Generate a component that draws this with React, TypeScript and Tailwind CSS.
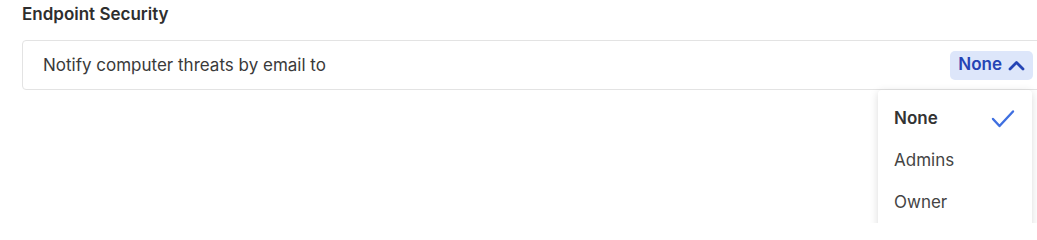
import React from "react";

function ChevronUp() {
  return (
    <svg width="17" height="11" viewBox="0 0 17 11" fill="none">
      <path d="M2 9 L8.5 2.5 L15 9" stroke="currentColor" strokeWidth="2.8" strokeLinecap="round" strokeLinejoin="round" />
    </svg>
  );
}

function Check() {
  return (
    <svg width="24" height="20" viewBox="0 0 24 20" fill="none">
      <path d="M2 10 L8.5 17 L22 2.5" stroke="#3f6fe0" strokeWidth="2.4" strokeLinecap="round" strokeLinejoin="round" />
    </svg>
  );
}

export default function App() {
  return (
    <div className="relative w-[1037px] h-[223px] overflow-hidden bg-white" style={{ fontFamily: "Inter, 'Noto Sans', sans-serif" }}>
      <div className="pl-[22px] pt-[3px]">
        <h2 className="text-[17px] leading-[22px] font-semibold text-[#2e2e2e]">Endpoint Security</h2>
        <div className="mt-[15px] w-[1030px] h-[50px] border border-[#e3e3e3] rounded-[4px] flex items-center justify-between pl-[20px] pr-[18px]">
          <span className="text-[17px] text-[#3a3a3a] pt-[2px]">Notify computer threats by email to</span>
          <div className="flex items-center gap-[6px] h-[29px] pl-[8px] pr-[8px] rounded-[5px] bg-[#dde6fa] text-[#2544b5] text-[17px] font-semibold">
            <span>None</span>
            <ChevronUp />
          </div>
        </div>
      </div>
      <div className="absolute left-[878px] top-[90px] w-[154px] h-[160px] bg-white rounded-[4px] shadow-[0_2px_8px_rgba(0,0,0,0.15)] pt-[8px]">
        <div className="flex items-center justify-between h-[42px] pl-[16px] pr-[17px]">
          <span className="text-[17px] font-semibold text-[#333]">None</span>
          <Check />
        </div>
        <div className="flex items-center h-[42px] pl-[16px] text-[17px] text-[#444]">Admins</div>
        <div className="flex items-center h-[42px] pl-[16px] text-[17px] text-[#444]">Owner</div>
      </div>
    </div>
  );
}
